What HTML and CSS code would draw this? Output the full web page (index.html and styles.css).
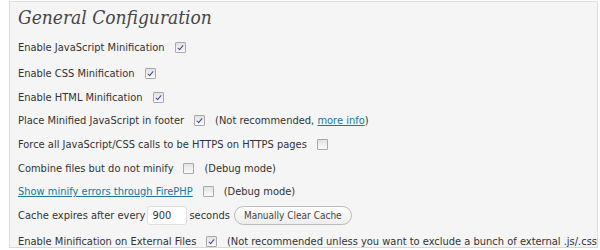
FILE: index.html
```html
<!DOCTYPE html>
<html>
<head>
    <meta charset="UTF-8">
    <title>General Configuration</title>
    <link rel="stylesheet" href="styles.css">
</head>
<body>
    <div class="wrap">
        <h2>General Configuration</h2>
        <form class="settings">
            <div class="row r1">
                <label for="js">Enable JavaScript Minification</label>
                <input type="checkbox" id="js" checked>
            </div>
            <div class="row r2">
                <label for="css">Enable CSS Minification</label>
                <input type="checkbox" id="css" checked>
            </div>
            <div class="row r3">
                <label for="html">Enable HTML Minification</label>
                <input type="checkbox" id="html" checked>
            </div>
            <div class="row r4">
                <label for="footer">Place Minified JavaScript in footer</label>
                <input type="checkbox" id="footer" checked>
                <span class="note">(Not recommended, <a href="#">more info</a>)</span>
            </div>
            <div class="row r5">
                <label for="https">Force all JavaScript/CSS calls to be HTTPS on HTTPS pages</label>
                <input type="checkbox" id="https">
            </div>
            <div class="row r6">
                <label for="combine">Combine files but do not minify</label>
                <input type="checkbox" id="combine">
                <span class="note">(Debug mode)</span>
            </div>
            <div class="row r7">
                <label for="firephp"><a href="#">Show minify errors through FirePHP</a></label>
                <input type="checkbox" id="firephp">
                <span class="note">(Debug mode)</span>
            </div>
            <div class="row r8">
                <label for="expires">Cache expires after every</label>
                <input type="text" id="expires" class="small-text" value="900">
                <span class="unit">seconds</span>
                <button type="button" class="button">Manually Clear Cache</button>
            </div>
            <div class="row r9">
                <label for="external">Enable Minification on External Files</label>
                <input type="checkbox" id="external" checked>
                <span class="note">(Not recommended unless you want to exclude a bunch of external .js/.css</span>
            </div>
        </form>
    </div>
</body>
</html>
```

FILE: styles.css
```css
html,
body {
    margin: 0;
    padding: 0;
    background-color: #ffffff;
    overflow: hidden;
}

body {
    font-family: "DejaVu Sans Condensed", "DejaVu Sans", Verdana, sans-serif;
    font-size: 11px;
    color: #333333;
}

.wrap {
    margin: 1px 2px 0 9px;
    height: 245px;
    border: 1px solid #dfdfdf;
    border-bottom-color: #d8d8d8;
    background-color: #f5f5f5;
    padding-left: 8px;
    overflow: hidden;
    white-space: nowrap;
}

h2 {
    margin: 0;
    padding-top: 4px;
    height: 29px;
    font-family: "DejaVu Serif Condensed", "DejaVu Serif", Georgia, serif;
    font-style: italic;
    font-weight: normal;
    font-size: 19px;
    color: #464646;
}

.row {
    display: flex;
    align-items: center;
    height: 24px;
}

.r1 {
    height: 25px;
}

.r2 {
    height: 26px;
}

.r3,
.r4,
.r7 {
    height: 23px;
}

.r9 {
    height: 28px;
}

input[type=checkbox] {
    appearance: none;
    -webkit-appearance: none;
    width: 11px;
    height: 11px;
    margin: 0 10px;
    border: 1px solid #a9a9a9;
    border-radius: 1px;
    background: linear-gradient(#e2e2e2, #fbfbfb);
    position: relative;
    box-sizing: border-box;
}

input[type=checkbox]:checked::after {
    content: "";
    position: absolute;
    left: 3px;
    top: 1px;
    width: 2px;
    height: 5px;
    border-right: 1.5px solid #3a4aa0;
    border-bottom: 1.5px solid #3a4aa0;
    transform: rotate(40deg);
}

a {
    color: #21759b;
    text-decoration: underline;
}

.small-text {
    width: 40px;
    height: 19px;
    margin: 0 2px;
    padding: 1px 4px;
    box-sizing: border-box;
    border: 1px solid #dfdfdf;
    border-radius: 3px;
    background-color: #ffffff;
    font-family: "DejaVu Sans Condensed", "DejaVu Sans", Verdana, sans-serif;
    font-size: 11px;
    color: #333333;
}

.unit {
    margin-right: 4px;
}

.button {
    height: 19px;
    padding: 0 9px;
    border: 1px solid #bbbbbb;
    border-radius: 10px;
    background: linear-gradient(#ffffff, #ededed);
    font-family: "DejaVu Sans Condensed", "DejaVu Sans", Verdana, sans-serif;
    font-size: 10px;
    color: #464646;
}
```
